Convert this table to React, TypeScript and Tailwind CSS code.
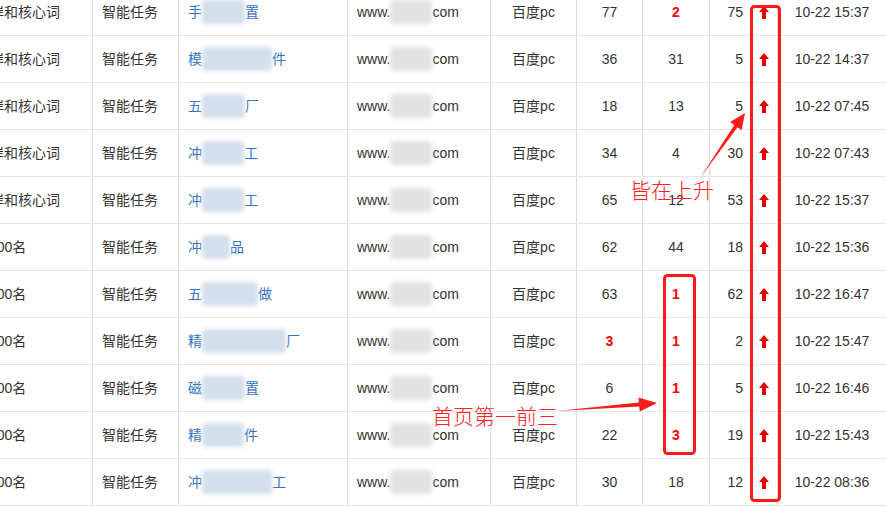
import React from "react";

type Row = {
  c1: "a" | "b";
  k1: string;
  kw: number;
  k2: string;
  v6: string;
  r6?: boolean;
  v7: string;
  r7?: boolean;
  v8: string;
  t: string;
};

const rows: Row[] = [
  { c1: "a", k1: "手", kw: 43, k2: "置", v6: "77", v7: "2", r7: true, v8: "75", t: "10-22 15:37" },
  { c1: "a", k1: "模", kw: 70, k2: "件", v6: "36", v7: "31", v8: "5", t: "10-22 14:37" },
  { c1: "a", k1: "五", kw: 43, k2: "厂", v6: "18", v7: "13", v8: "5", t: "10-22 07:45" },
  { c1: "a", k1: "冲", kw: 42, k2: "工", v6: "34", v7: "4", v8: "30", t: "10-22 07:43" },
  { c1: "a", k1: "冲", kw: 42, k2: "工", v6: "65", v7: "12", v8: "53", t: "10-22 15:37" },
  { c1: "b", k1: "冲", kw: 28, k2: "品", v6: "62", v7: "44", v8: "18", t: "10-22 15:36" },
  { c1: "b", k1: "五", kw: 56, k2: "做", v6: "63", v7: "1", r7: true, v8: "62", t: "10-22 16:47" },
  { c1: "b", k1: "精", kw: 84, k2: "厂", v6: "3", r6: true, v7: "1", r7: true, v8: "2", t: "10-22 15:47" },
  { c1: "b", k1: "磁", kw: 43, k2: "置", v6: "6", v7: "1", r7: true, v8: "5", t: "10-22 16:46" },
  { c1: "b", k1: "精", kw: 42, k2: "件", v6: "22", v7: "3", r7: true, v8: "19", t: "10-22 15:43" },
  { c1: "b", k1: "冲", kw: 70, k2: "工", v6: "30", v7: "18", v8: "12", t: "10-22 08:36" },
];

const UpArrow = () => (
  <svg width="10" height="13" viewBox="0 0 10 13" className="block">
    <path d="M5 0 L10 6 H7 V13 H3 V6 H0 Z" fill="#e00000" />
  </svg>
);

const Num = ({ v, red }: { v: string; red?: boolean }) =>
  red ? (
    <span className="font-bold text-[#ff0000] text-[14px]">{v}</span>
  ) : (
    <span>{v}</span>
  );

export default function App() {
  return (
    <div
      className="relative w-[886px] h-[508px] overflow-hidden bg-white text-[14px] text-[#333]"
      style={{ fontFamily: '"Liberation Sans", Arial, "Noto Sans CJK SC", sans-serif' }}
    >
      <div className="mt-[-11px]">
        {rows.map((r, i) => (
          <div key={i} className="flex h-[47px] border-b border-[#e6e6e6]">
            <div className="w-[93px] shrink-0 border-r border-[#dddddd] flex items-center overflow-hidden whitespace-nowrap">
              {r.c1 === "a" ? (
                <span className="ml-[-10px]">岸和核心词</span>
              ) : (
                <span className="ml-[-25px]">前100名</span>
              )}
            </div>
            <div className="w-[86px] shrink-0 border-r border-[#dddddd] flex items-center pl-[9px]">
              智能任务
            </div>
            <div className="w-[169px] shrink-0 border-r border-[#dddddd] flex items-center pl-[9px] text-[#3574bd] whitespace-nowrap">
              <span>{r.k1}</span>
              <span
                className="inline-block h-[24px] bg-[#d3dfec] blur-[2px] rounded-[4px]"
                style={{ width: r.kw }}
              />
              <span>{r.k2}</span>
            </div>
            <div className="w-[143px] shrink-0 border-r border-[#dddddd] flex items-center pl-[9px] whitespace-nowrap">
              <span>www.</span>
              <span className="inline-block w-[42px] h-[24px] bg-[#e2e2e2] blur-[2px] rounded-[4px]" />
              <span>com</span>
            </div>
            <div className="w-[86px] shrink-0 border-r border-[#dddddd] flex items-center justify-center">
              百度pc
            </div>
            <div className="w-[66px] shrink-0 border-r border-[#dddddd] flex items-center justify-center">
              <Num v={r.v6} red={r.r6} />
            </div>
            <div className="w-[67px] shrink-0 border-r border-[#dddddd] flex items-center justify-center">
              <Num v={r.v7} red={r.r7} />
            </div>
            <div className="w-[68px] shrink-0 border-r border-[#dddddd] flex items-center">
              <span className="w-[33px] text-right">{r.v8}</span>
              <span className="ml-[16px]">
                <UpArrow />
              </span>
            </div>
            <div className="w-[108px] shrink-0 flex items-center justify-center">{r.t}</div>
          </div>
        ))}
      </div>

      <svg
        className="absolute left-0 top-0 pointer-events-none"
        width="886"
        height="508"
        viewBox="0 0 886 508"
      >
        <rect x="751.5" y="6.5" width="28" height="494" rx="3" fill="none" stroke="#ff1a1a" strokeWidth="3" />
        <rect x="664.5" y="275.5" width="30" height="178" rx="3" fill="none" stroke="#ff1a1a" strokeWidth="3" />
        <polygon
          points="700,178 734.3,125 730.2,122.1 745,113 741.6,130.1 737.5,127.2"
          fill="#ff1a1a"
        />
        <polygon
          points="557,411 638.9,402.4 638.5,397.4 657,403 639.7,411.4 639.3,406.4"
          fill="#ff1a1a"
        />
      </svg>
      <span
        className="absolute left-[630px] top-[176px] text-[21px] leading-[26px] text-[#ff2020] whitespace-nowrap"
        style={{ fontFamily: '"Noto Sans CJK SC", sans-serif', fontWeight: 300 }}
      >
        皆在上升
      </span>
      <span
        className="absolute left-[432px] top-[402px] text-[21px] leading-[26px] text-[#ff2020] whitespace-nowrap"
        style={{ fontFamily: '"Noto Sans CJK SC", sans-serif', fontWeight: 300 }}
      >
        首页第一前三
      </span>
    </div>
  );
}
